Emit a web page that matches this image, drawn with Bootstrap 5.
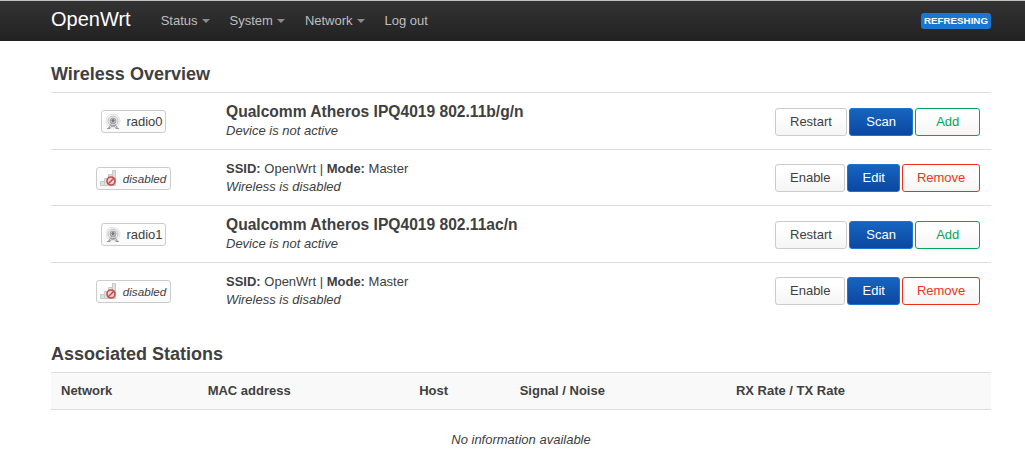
<!DOCTYPE html>
<html lang="en">
<head>
<meta charset="utf-8">
<meta name="viewport" content="width=device-width, initial-scale=1">
<title>OpenWrt - Wireless Overview</title>
<link href="https://cdn.jsdelivr.net/npm/bootstrap@5.3.0/dist/css/bootstrap.min.css" rel="stylesheet">
<style>
  body { font: 13px/18px "Liberation Sans", Arial, sans-serif; color: #404040; background: #fff; }
  .topbar { min-height: 41px; border-top: 1px solid #bfc3bf; background: linear-gradient(#333, #222); }
  .page { padding-left: 51px; padding-right: 34px; }
  main.page { padding-top: 15px; }
  .topbar .navbar-brand { font-size: 20px; line-height: 20px; color: #fff; padding: 8px 0 12px; margin-right: 20px; }
  .topbar .nav-link { --bs-nav-link-font-size: 13px; color: #bfbfbf; padding: 10px 10px 11px; line-height: 19px; }
  .topbar .dropdown-toggle::after { border-top: 4px solid #8c8c8c; border-left: 4px solid transparent; border-right: 4px solid transparent; margin-left: 4px; vertical-align: 2px; }
  .topbar .dropdown-menu { font-size: 13px; }
  .status { background: #1976d2; color: #fff; font-size: .75em; line-height: 14px; font-weight: 700; padding: 1px 3px; border-radius: 3px; }
  h3 { font-size: 18px; line-height: 36px; font-weight: 700; margin: 0; }
  .grid-table { --bs-table-bg: transparent; --bs-table-color: #404040; --bs-border-color: #ddd; font-size: 13px; line-height: 18px; color: #404040; table-layout: fixed; }
  .grid-table > :not(caption) > * > * { padding: 10px 10px 9px; border-bottom-width: 0; border-top: 1px solid #ddd; }
  .radios { margin-bottom: 17px; }
  .radios td { height: 56px; vertical-align: middle; }
  .radios .device td { height: 57px; }
  .w-icon { width: 165px; }
  .w-actions { width: 227px; }
  .device-name { font-size: 1.2em; line-height: 17px; margin-bottom: 2px; font-weight: 700; }
  .ifacebadge { border: 1px solid #ccc; border-radius: 3px; background: linear-gradient(#fff 25%, #f9f9f9); padding: 1px 2px 1px 3px; line-height: 19px; gap: 5px; vertical-align: middle; }
  .ifacebadge em { font-size: .9em; padding: 0 2px; }
  .ifacebadge svg { width: 16px; height: 16px; flex: none; }
  .op { --bs-btn-font-size: 13px; --bs-btn-line-height: 18px; --bs-btn-padding-y: 4px; --bs-btn-padding-x: 14px; --bs-btn-border-radius: 3px;
    --bs-btn-color: #404040; --bs-btn-border-color: #ccc; background-image: linear-gradient(#fff 25%, #f5f5f5); flex: 1 1 0; margin: 0 1px; }
  .op-blue { --bs-btn-color: #fff; --bs-btn-border-color: #1976d2; background-image: linear-gradient(#1565c0, #0d47a1); }
  .op-green { --bs-btn-color: #00a65a; --bs-btn-border-color: #00a65a; }
  .op-red { --bs-btn-color: #ee3322; --bs-btn-border-color: #f02b1d; }
  .stations > thead > tr > th { background: #f9f9f9; padding-top: 9px !important; }
  .stations tbody td { padding-top: 21px !important; }
</style>
</head>
<body>
<svg class="d-none" aria-hidden="true">
  <symbol id="radio" viewBox="0 0 16 16">
    <circle cx="8" cy="7" r="7" fill="#f4f4f4" stroke="#e0e0e0" stroke-width=".8"/>
    <circle cx="8" cy="7" r="5" fill="#e6e6e6" stroke="#c0c0c0" stroke-width=".9"/>
    <circle cx="8" cy="7" r="2.9" fill="#ccc" stroke="#a0a0a0"/>
    <circle cx="8" cy="6.6" r="1.5" fill="#777"/>
    <path d="M7.500 8 3.500 14M8.500 8l4 6M5.500 11.500h5M3.500 14 10 11.200M12.500 14 6 11.200" fill="none" stroke="#999" stroke-width=".8"/>
    <path d="M2 14.500h3.500M10.500 14.500H14" stroke="#999"/>
  </symbol>
  <symbol id="nosignal" viewBox="0 0 16 16">
    <path d="M.5 11.500h4v4h-4zM4.500 8.500h4v7h-4zM8.500 4.500h4v11h-4zM12.500 .5h3v15h-3z" fill="#dfe1dd" stroke="#c8cac6"/>
    <circle cx="11" cy="11" r="4" fill="#eed3d3" stroke="#c44c4c" stroke-width="1.600"/>
    <path d="m8.300 13.700 5.400-5.400" stroke="#c44c4c" stroke-width="1.600"/>
  </symbol>
</svg>

<header class="topbar page d-flex align-items-start">
  <a class="navbar-brand" href="#">OpenWrt</a>
  <ul class="nav me-auto">
    <li class="nav-item dropdown"><a class="nav-link dropdown-toggle" href="#" data-bs-toggle="dropdown">Status</a>
      <ul class="dropdown-menu"><li><a class="dropdown-item" href="#">Overview</a></li></ul></li>
    <li class="nav-item dropdown"><a class="nav-link dropdown-toggle" href="#" data-bs-toggle="dropdown">System</a>
      <ul class="dropdown-menu"><li><a class="dropdown-item" href="#">System</a></li></ul></li>
    <li class="nav-item dropdown"><a class="nav-link dropdown-toggle" href="#" data-bs-toggle="dropdown">Network</a>
      <ul class="dropdown-menu"><li><a class="dropdown-item" href="#">Wireless</a></li></ul></li>
    <li class="nav-item"><a class="nav-link" href="#">Log out</a></li>
  </ul>
  <span class="status align-self-center">REFRESHING</span>
</header>

<main class="page">
  <h3>Wireless Overview</h3>
  <table class="table grid-table radios">
    <colgroup><col class="w-icon"><col><col class="w-actions"></colgroup>
    <tbody>
      <tr class="device">
        <td class="text-center"><span class="ifacebadge d-inline-flex align-items-center"><svg><use href="#radio"/></svg>radio0</span></td>
        <td><div class="device-name">Qualcomm Atheros IPQ4019 802.11b/g/n</div><em>Device is not active</em></td>
        <td><div class="d-flex"><button type="button" class="btn op">Restart</button><button type="button" class="btn op op-blue">Scan</button><button type="button" class="btn op op-green">Add</button></div></td>
      </tr>
      <tr>
        <td class="text-center"><span class="ifacebadge d-inline-flex align-items-center"><svg><use href="#nosignal"/></svg><em>disabled</em></span></td>
        <td><strong>SSID:</strong> OpenWrt | <strong>Mode:</strong> Master<br><em>Wireless is disabled</em></td>
        <td><div class="d-flex"><button type="button" class="btn op">Enable</button><button type="button" class="btn op op-blue">Edit</button><button type="button" class="btn op op-red">Remove</button></div></td>
      </tr>
      <tr class="device">
        <td class="text-center"><span class="ifacebadge d-inline-flex align-items-center"><svg><use href="#radio"/></svg>radio1</span></td>
        <td><div class="device-name">Qualcomm Atheros IPQ4019 802.11ac/n</div><em>Device is not active</em></td>
        <td><div class="d-flex"><button type="button" class="btn op">Restart</button><button type="button" class="btn op op-blue">Scan</button><button type="button" class="btn op op-green">Add</button></div></td>
      </tr>
      <tr>
        <td class="text-center"><span class="ifacebadge d-inline-flex align-items-center"><svg><use href="#nosignal"/></svg><em>disabled</em></span></td>
        <td><strong>SSID:</strong> OpenWrt | <strong>Mode:</strong> Master<br><em>Wireless is disabled</em></td>
        <td><div class="d-flex"><button type="button" class="btn op">Enable</button><button type="button" class="btn op op-blue">Edit</button><button type="button" class="btn op op-red">Remove</button></div></td>
      </tr>
    </tbody>
  </table>

  <h3>Associated Stations</h3>
  <table class="table grid-table stations mb-0">
    <colgroup><col style="width:15.6%"><col style="width:22.5%"><col style="width:10.7%"><col style="width:23%"><col></colgroup>
    <thead><tr><th scope="col">Network</th><th scope="col">MAC address</th><th scope="col">Host</th><th scope="col">Signal / Noise</th><th scope="col">RX Rate / TX Rate</th></tr></thead>
    <tbody><tr><td colspan="5" class="text-center"><em>No information available</em></td></tr></tbody>
  </table>
</main>
<script src="https://cdn.jsdelivr.net/npm/bootstrap@5.3.0/dist/js/bootstrap.bundle.min.js"></script>
</body>
</html>
